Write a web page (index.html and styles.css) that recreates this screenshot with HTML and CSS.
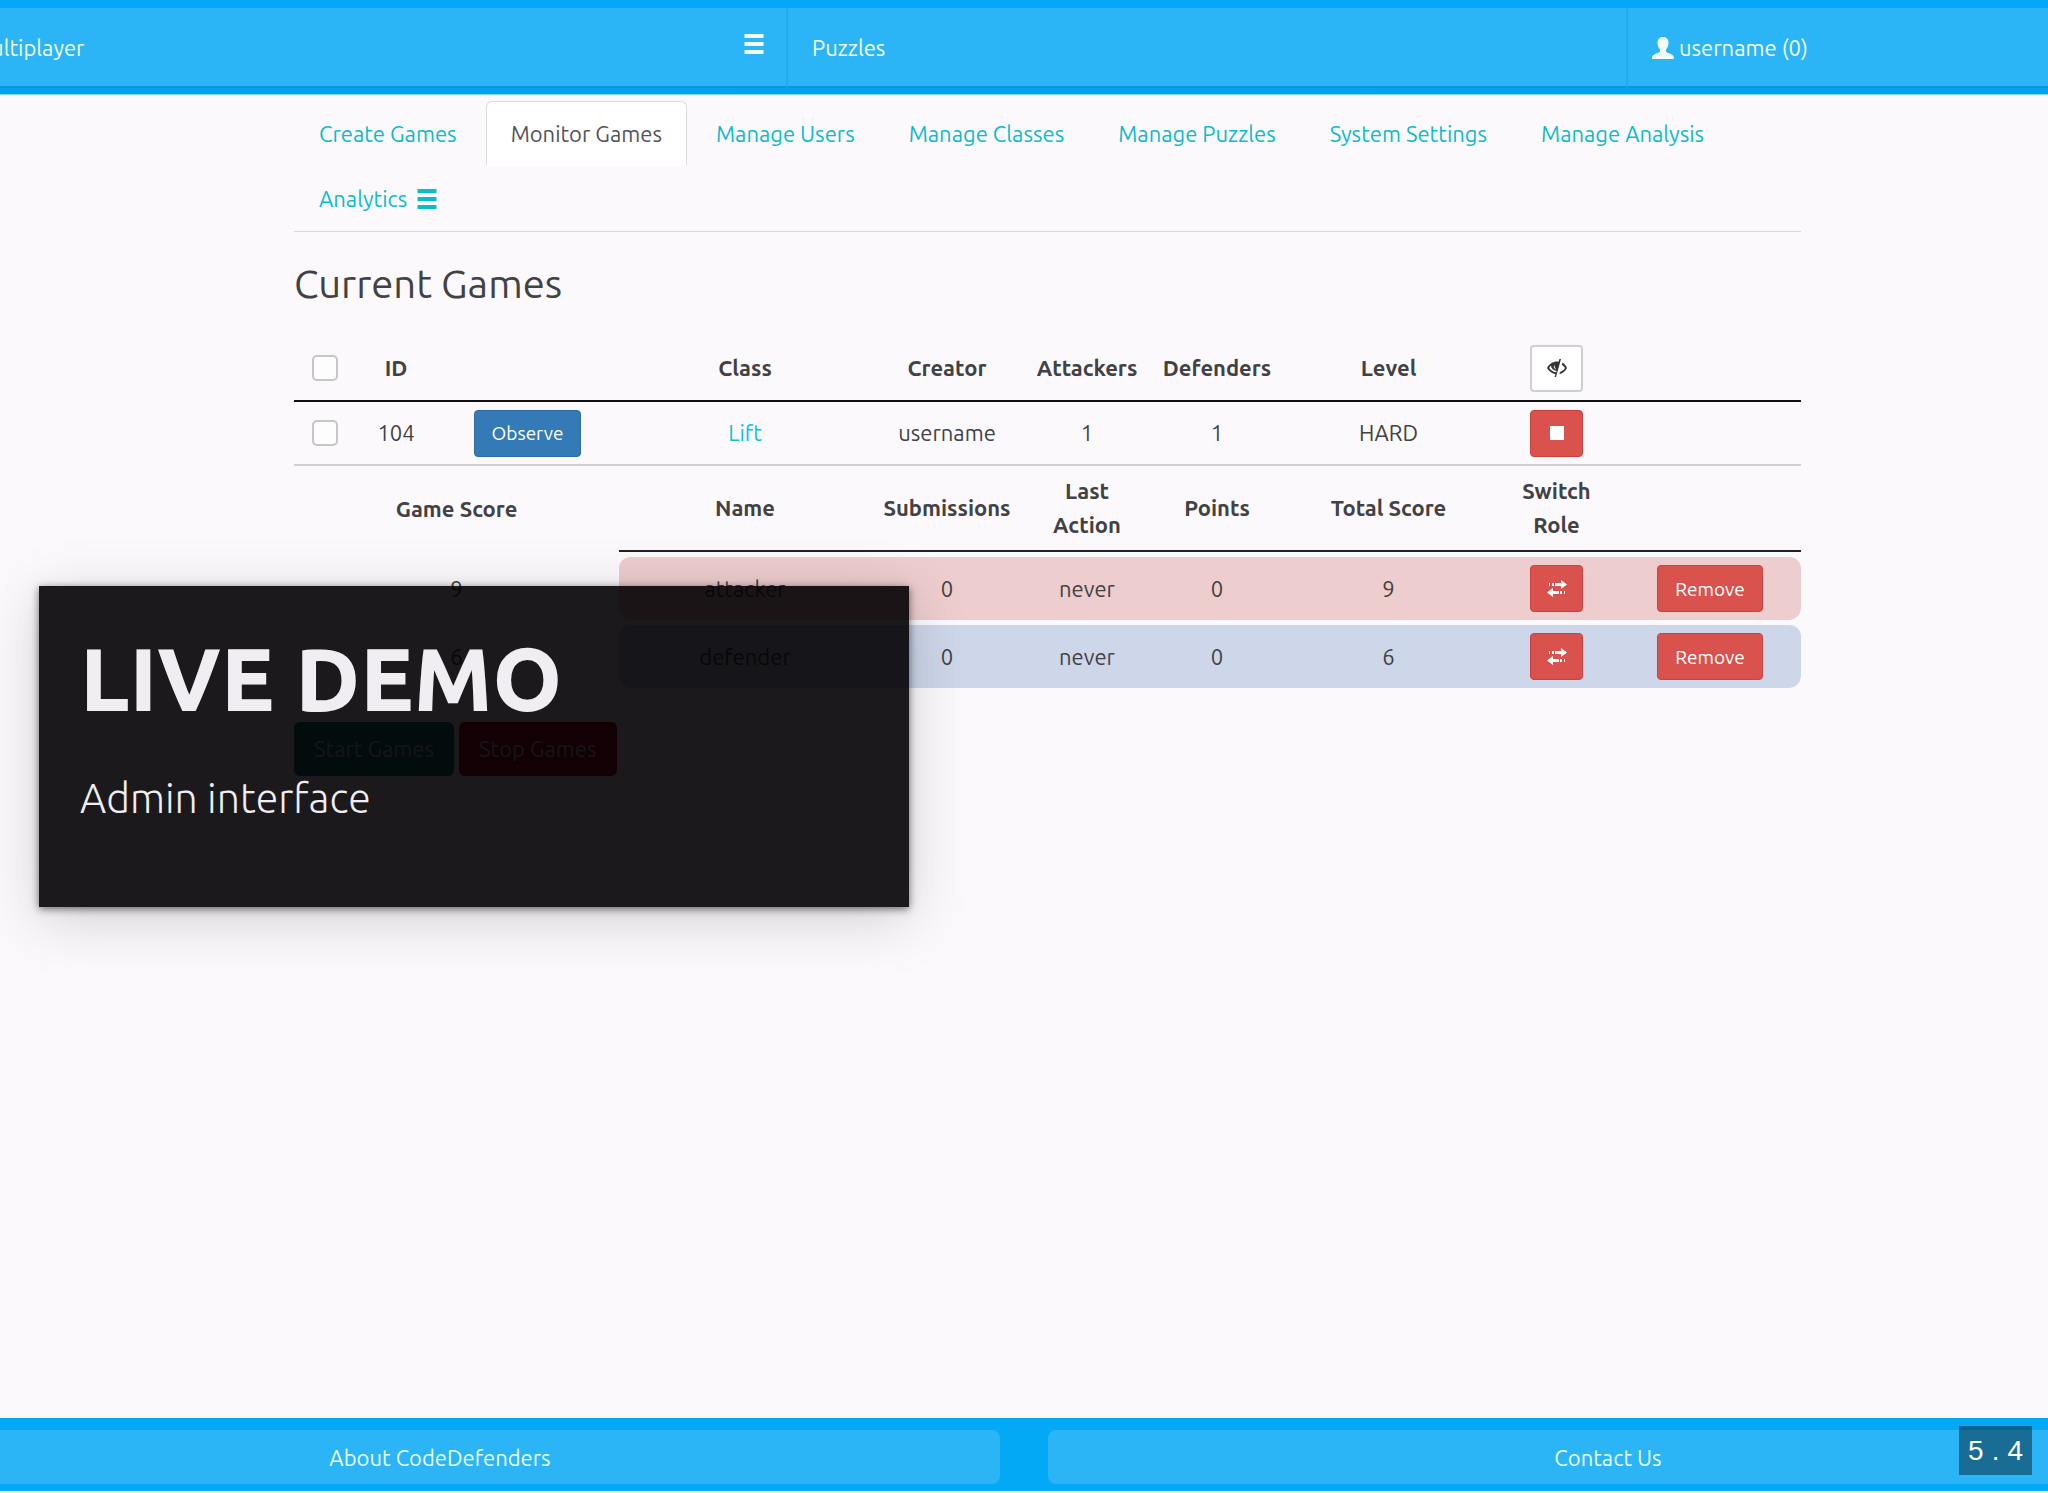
FILE: index.html
```html
<!DOCTYPE html>
<html lang="en">
<head>
<meta charset="utf-8">
<title>Code Defenders – Monitor Games</title>
<link rel="stylesheet" href="styles.css">
</head>
<body>
<svg class="sprite" aria-hidden="true">
  <symbol id="bars" viewBox="0 0 19 20"><path fill="currentColor" d="M0 0h19v4H0zM0 8h19v4H0zM0 16h19v4H0z"/></symbol>
  <symbol id="user" viewBox="0 0 22 22"><path fill="currentColor" d="M11 0c3.200 0 5.500 2 5.500 5.500 0 3-1 5.500-2.500 7v1.500c0 1 1 1.500 3 2.300 3.500 1.300 5 2.200 5 5.700H0c0-3.500 1.500-4.400 5-5.700 2-.8 3-1.300 3-2.300v-1.500c-1.500-1.500-2.500-4-2.500-7C5.500 2 7.800 0 11 0z"/></symbol>
  <symbol id="swap" viewBox="0 0 20 17"><path fill="currentColor" d="M2 3h1v3H2zM5 3h2v3H5zM8 3h6V0l6 4.500L14 9V6H8zM18 11h-1v3h1zM15 11h-2v3h2zM12 11H6V8L0 12.500 6 17v-3h6z"/></symbol>
  <symbol id="eye" viewBox="0 0 20 18"><path fill="currentColor" d="M14 0 9 18H7.500l1-3C4.500 14.500 1.500 11.500 0 9c2-4 6-6.500 10-6.500l1.500.2L12.500 0zM4 6.500C3 7.300 2.500 8.300 2.200 9c1 1.600 3.500 4 7 4.200l.4-1.300C6 11.200 4 9.300 4 6.500z" fill-rule="evenodd"/><path fill="currentColor" d="m15.500 3.500-.7 2.300C16.400 6.800 17.500 8.200 18 9c-.8 1.500-2.700 3.200-5 4l-.7 2.200C16 14.500 18.700 11.500 20 9c-.8-1.900-2.300-4-4.500-5.500z"/><path fill="#fff" d="M7 5.500 6.800 8l1.300 2.300.8-.3L7.800 8z"/></symbol>
  <symbol id="stop" viewBox="0 0 14 14"><path fill="currentColor" d="M0 0h14v14H0z"/></symbol>
</svg>

<header class="topbar">
  <nav class="topnav" aria-label="Main">
    <a class="topnav-item" href="#multiplayer">Multiplayer <svg class="icon-bars"><use href="#bars"/></svg></a>
    <a class="topnav-item" href="#puzzles">Puzzles</a>
    <a class="topnav-item user" href="#profile"><svg class="icon-user"><use href="#user"/></svg>username (0)</a>
  </nav>
</header>

<main class="content">
  <nav class="tabs" aria-label="Administration">
    <a class="tab" href="#create">Create Games</a>
    <a class="tab active" href="#monitor" aria-current="page">Monitor Games</a>
    <a class="tab" href="#users">Manage Users</a>
    <a class="tab" href="#classes">Manage Classes</a>
    <a class="tab" href="#puzzles-admin">Manage Puzzles</a>
    <a class="tab" href="#settings">System Settings</a>
    <a class="tab" href="#analysis">Manage Analysis</a>
    <a class="tab" href="#analytics">Analytics <svg class="icon-bars"><use href="#bars"/></svg></a>
  </nav>

  <h2 class="heading">Current Games</h2>

  <table class="games">
    <colgroup>
      <col class="c-check"><col class="c-id"><col class="c-observe"><col class="c-class"><col class="c-creator">
      <col class="c-att"><col class="c-def"><col class="c-level"><col class="c-action"><col class="c-last">
    </colgroup>
    <thead>
      <tr class="head">
        <th><input type="checkbox" class="check" aria-label="Select all games"></th>
        <th>ID</th><th></th><th>Class</th><th>Creator</th><th>Attackers</th><th>Defenders</th><th>Level</th>
        <th><button type="button" class="btn btn-icon btn-plain" aria-label="Toggle player details"><svg class="icon-eye"><use href="#eye"/></svg></button></th>
        <th></th>
      </tr>
    </thead>
    <tbody>
      <tr class="game">
        <td><input type="checkbox" class="check" aria-label="Select game 104"></td>
        <td>104</td>
        <td><button type="button" class="btn btn-primary">Observe</button></td>
        <td><a class="link" href="#lift">Lift</a></td>
        <td>username</td><td>1</td><td>1</td><td>HARD</td>
        <td><button type="button" class="btn btn-icon btn-danger" aria-label="Stop game 104"><svg class="icon-stop"><use href="#stop"/></svg></button></td>
        <td></td>
      </tr>
      <tr class="subhead">
        <th colspan="3" class="score">Game Score</th>
        <th>Name</th><th>Submissions</th><th>Last<br>Action</th><th>Points</th><th>Total Score</th><th>Switch<br>Role</th><th></th>
      </tr>
      <tr class="player attacker">
        <td colspan="3" class="score">9</td>
        <td class="first">attacker</td><td>0</td><td>never</td><td>0</td><td>9</td>
        <td><button type="button" class="btn btn-icon btn-danger" aria-label="Switch role of attacker"><svg class="icon-swap"><use href="#swap"/></svg></button></td>
        <td class="last"><button type="button" class="btn btn-danger">Remove</button></td>
      </tr>
      <tr class="player defender">
        <td colspan="3" class="score">6</td>
        <td class="first">defender</td><td>0</td><td>never</td><td>0</td><td>6</td>
        <td><button type="button" class="btn btn-icon btn-danger" aria-label="Switch role of defender"><svg class="icon-swap"><use href="#swap"/></svg></button></td>
        <td class="last"><button type="button" class="btn btn-danger">Remove</button></td>
      </tr>
    </tbody>
  </table>

  <div class="actions">
    <button type="button" class="action start">Start Games</button>
    <button type="button" class="action stop">Stop Games</button>
  </div>
</main>

<footer class="footer">
  <div class="footer-links">
    <a class="footer-link" href="#about">About CodeDefenders</a>
    <a class="footer-link" href="#contact">Contact Us</a>
  </div>
</footer>

<section class="caption">
  <h1 class="caption-title">LIVE DEMO</h1>
  <p class="caption-text">Admin interface</p>
</section>
<a class="slide-number" href="#/4/3"><span>5</span><span>.</span><span>4</span></a>
</body>
</html>
```

FILE: styles.css
```css
* { box-sizing: border-box; }

body {
  margin: 0;
  min-height: 100vh;
  position: relative;
  display: flex;
  flex-direction: column;
  overflow-x: hidden;
  background: #fbf9fc;
  color: #424144;
  font: 22px/34px Ubuntu, "Noto Sans", sans-serif;
}

a { text-decoration: none; }
svg { display: block; }
.sprite { position: absolute; width: 0; height: 0; }

.icon-bars { width: 20px; height: 20px; }
.icon-user { width: 22px; height: 22px; }
.icon-swap { width: 20px; height: 17px; }
.icon-eye { width: 20px; height: 18px; }
.icon-stop { width: 14px; height: 14px; }

/* Top bar */
.topbar {
  overflow: hidden;
  background: #03a2ee;
  border-top: 8px solid #03a9f8;
  border-bottom: 1px solid #8bd4f8;
  padding-bottom: 6px;
}
.topnav {
  display: grid;
  grid-template-columns: 840fr 840fr 472fr;
  margin: 0 -52px;
}
.topnav-item {
  display: flex;
  align-items: center;
  justify-content: space-between;
  height: 80px;
  padding: 2px 22px 0 24px;
  background: #2bb5f7;
  border-right: 2px solid #20abec;
  border-bottom: 2px solid #0596dc;
  color: #f2fbff;
}
.topnav-item .icon-bars { margin-bottom: 8px; }
.topnav-item.user { justify-content: flex-start; gap: 5px; }

/* Tabs */
.content {
  flex: 1;
  width: calc(100% - 541px);
  margin: 0 247px 0 294px;
}
.tabs {
  display: flex;
  flex-wrap: wrap;
  column-gap: 4px;
  padding-top: 6px;
  border-bottom: 1px solid #d8d7da;
}
.tab {
  display: flex;
  align-items: center;
  gap: 10px;
  height: 65px;
  padding: 0 24px;
  border: 1px solid transparent;
  border-radius: 6px 6px 0 0;
  color: #0bbccb;
}
.tab.active {
  background: #fff;
  border-color: #dcdbde;
  border-bottom-color: transparent;
  color: #555357;
}

.heading {
  margin: 28px 0;
  font-size: 40px;
  line-height: 48px;
  font-weight: 400;
}

/* Games table */
.games {
  width: 100%;
  table-layout: fixed;
  border-collapse: separate;
  border-spacing: 0;
  text-align: center;
}
.c-check { width: 62px; }
.c-id { width: 80px; }
.c-observe { width: 183px; }
.c-class { width: 252px; }
.c-creator { width: 152px; }
.c-att { width: 128px; }
.c-def { width: 132px; }
.c-level { width: 211px; }
.c-action { width: 125px; }
.c-last { width: 182px; }

.games th,
.games td { padding: 0; vertical-align: middle; }
.games th { font-weight: 600; }
.head th { height: 66px; border-bottom: 2px solid #111; }
.game td { height: 64px; border-bottom: 2px solid #d0cfd2; }
.subhead th { height: 86px; border-bottom: 2px solid #222; }
.subhead .score { border-bottom: 0; }

.player td {
  height: 68px;
  border-top: 5px solid transparent;
  background-clip: padding-box;
}
.attacker td { background-color: #edcdce; }
.defender td { background-color: #ced6ea; }
.player .score { background-color: transparent; }
.player .first { border-radius: 12px 0 0 12px / 16px 0 0 12px; }
.player .last { border-radius: 0 12px 12px 0 / 0 16px 12px 0; }

.link { color: #0cc4d8; }

.check {
  appearance: none;
  display: block;
  width: 26px;
  height: 26px;
  margin: 0 auto;
  background: #fdfdfd;
  border: 2px solid #c6c5c8;
  border-radius: 5px;
}

.btn {
  display: inline-flex;
  align-items: center;
  justify-content: center;
  height: 47px;
  padding: 0 17px;
  border: 1px solid transparent;
  border-radius: 4px;
  color: #fff;
  font: 19px/24px Ubuntu, "Noto Sans", sans-serif;
  vertical-align: middle;
}
.btn-icon { width: 53px; padding: 0; }
.btn-primary { background: #337ab7; border-color: #2e6da4; }
.btn-danger { background: #d9524e; border-color: #cf403c; }
.btn-plain { background: #fff; border: 2px solid #cfced1; color: #333; }

.actions { display: flex; gap: 5px; margin-top: 34px; }
.action {
  height: 54px;
  padding: 0 20px;
  border: 0;
  border-radius: 6px;
  color: #ccc;
  font: 22px/34px Ubuntu, "Noto Sans", sans-serif;
}
.action.start { background: #007f73; }
.action.stop { background: #a00020; }

/* Footer */
.footer {
  overflow: hidden;
  margin-bottom: 2px;
  padding: 12px 0 7px;
  background: #03a9f4;
}
.footer-links {
  display: grid;
  grid-template-columns: 1fr 1fr;
  gap: 48px;
  margin: 0 -120px;
}
.footer-link {
  padding: 11px 0 9px;
  background: #2bb5f7;
  border-radius: 8px;
  color: #e6fbff;
  text-align: center;
}

/* Slide overlay */
.caption {
  position: absolute;
  left: 39px;
  top: 586px;
  width: 870px;
  height: 321px;
  padding: 40px 41px;
  background: rgba(2, 0, 2, 0.9);
  box-shadow: 0 2px 8px rgba(0, 0, 0, 0.55), 0 12px 56px rgba(0, 0, 0, 0.17);
  color: #f0eef2;
}
.caption-title {
  margin: 0;
  font-size: 88px;
  line-height: 106px;
  font-weight: 800;
}
.caption-text {
  margin: 38px 0 0;
  font: 300 41px/56px Ubuntu, "Open Sans", sans-serif;
}
.slide-number {
  position: absolute;
  right: 16px;
  bottom: 18px;
  display: flex;
  gap: 8px;
  padding: 8px 9px;
  background: rgba(0, 0, 0, 0.4);
  color: #fff;
  font: 28px/33px "Liberation Sans", sans-serif;
}
```
